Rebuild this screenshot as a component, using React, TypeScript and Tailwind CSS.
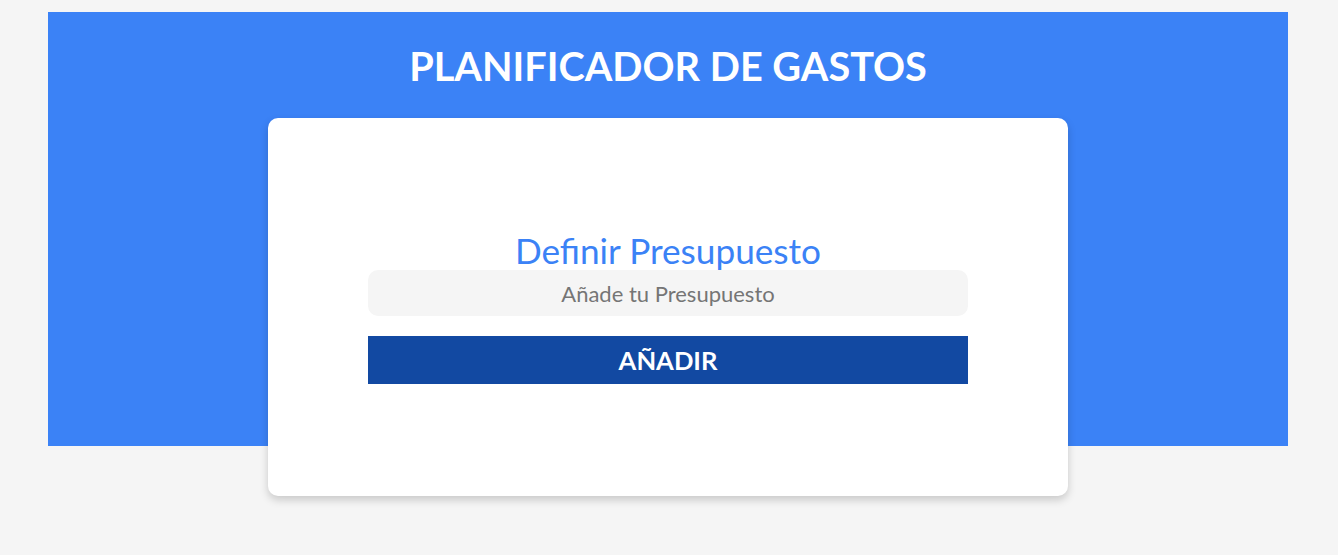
import React, { useState } from "react";

export default function App() {
  const [budget, setBudget] = useState("");

  return (
    <div className="min-h-screen bg-[#f5f5f5] pt-3 font-['Lato',sans-serif]">
      {/* Header with overlapping card */}
      <header className="ml-12 mr-[50px] flex flex-col items-center bg-[#3b82f6] pt-[30px]">
        <h1 className="text-center text-[39.7px] font-bold leading-[48px] text-white">
          PLANIFICADOR DE GASTOS
        </h1>

        <div className="mt-7 -mb-[50px] w-[800px] rounded-[10px] bg-white py-28 shadow-[0_4px_8px_rgba(0,0,0,0.18)]">
          <form
            className="mx-auto w-[600px]"
            onSubmit={(e) => e.preventDefault()}
          >
            <label
              htmlFor="budget"
              className="block text-center text-[35.2px] leading-10 text-[#3b82f6]"
            >
              Definir Presupuesto
            </label>
            <input
              id="budget"
              type="text"
              inputMode="numeric"
              value={budget}
              onChange={(e) => setBudget(e.target.value)}
              placeholder="Añade tu Presupuesto"
              className="block h-[46px] w-full rounded-[10px] bg-[#f5f5f5] text-center text-[22px] text-[#555] outline-none placeholder:text-[#757575]"
            />
            <button
              type="submit"
              className="mt-5 h-12 w-full bg-[#1249a2] text-[25.6px] font-bold uppercase text-white"
            >
              Añadir
            </button>
          </form>
        </div>
      </header>
    </div>
  );
}
